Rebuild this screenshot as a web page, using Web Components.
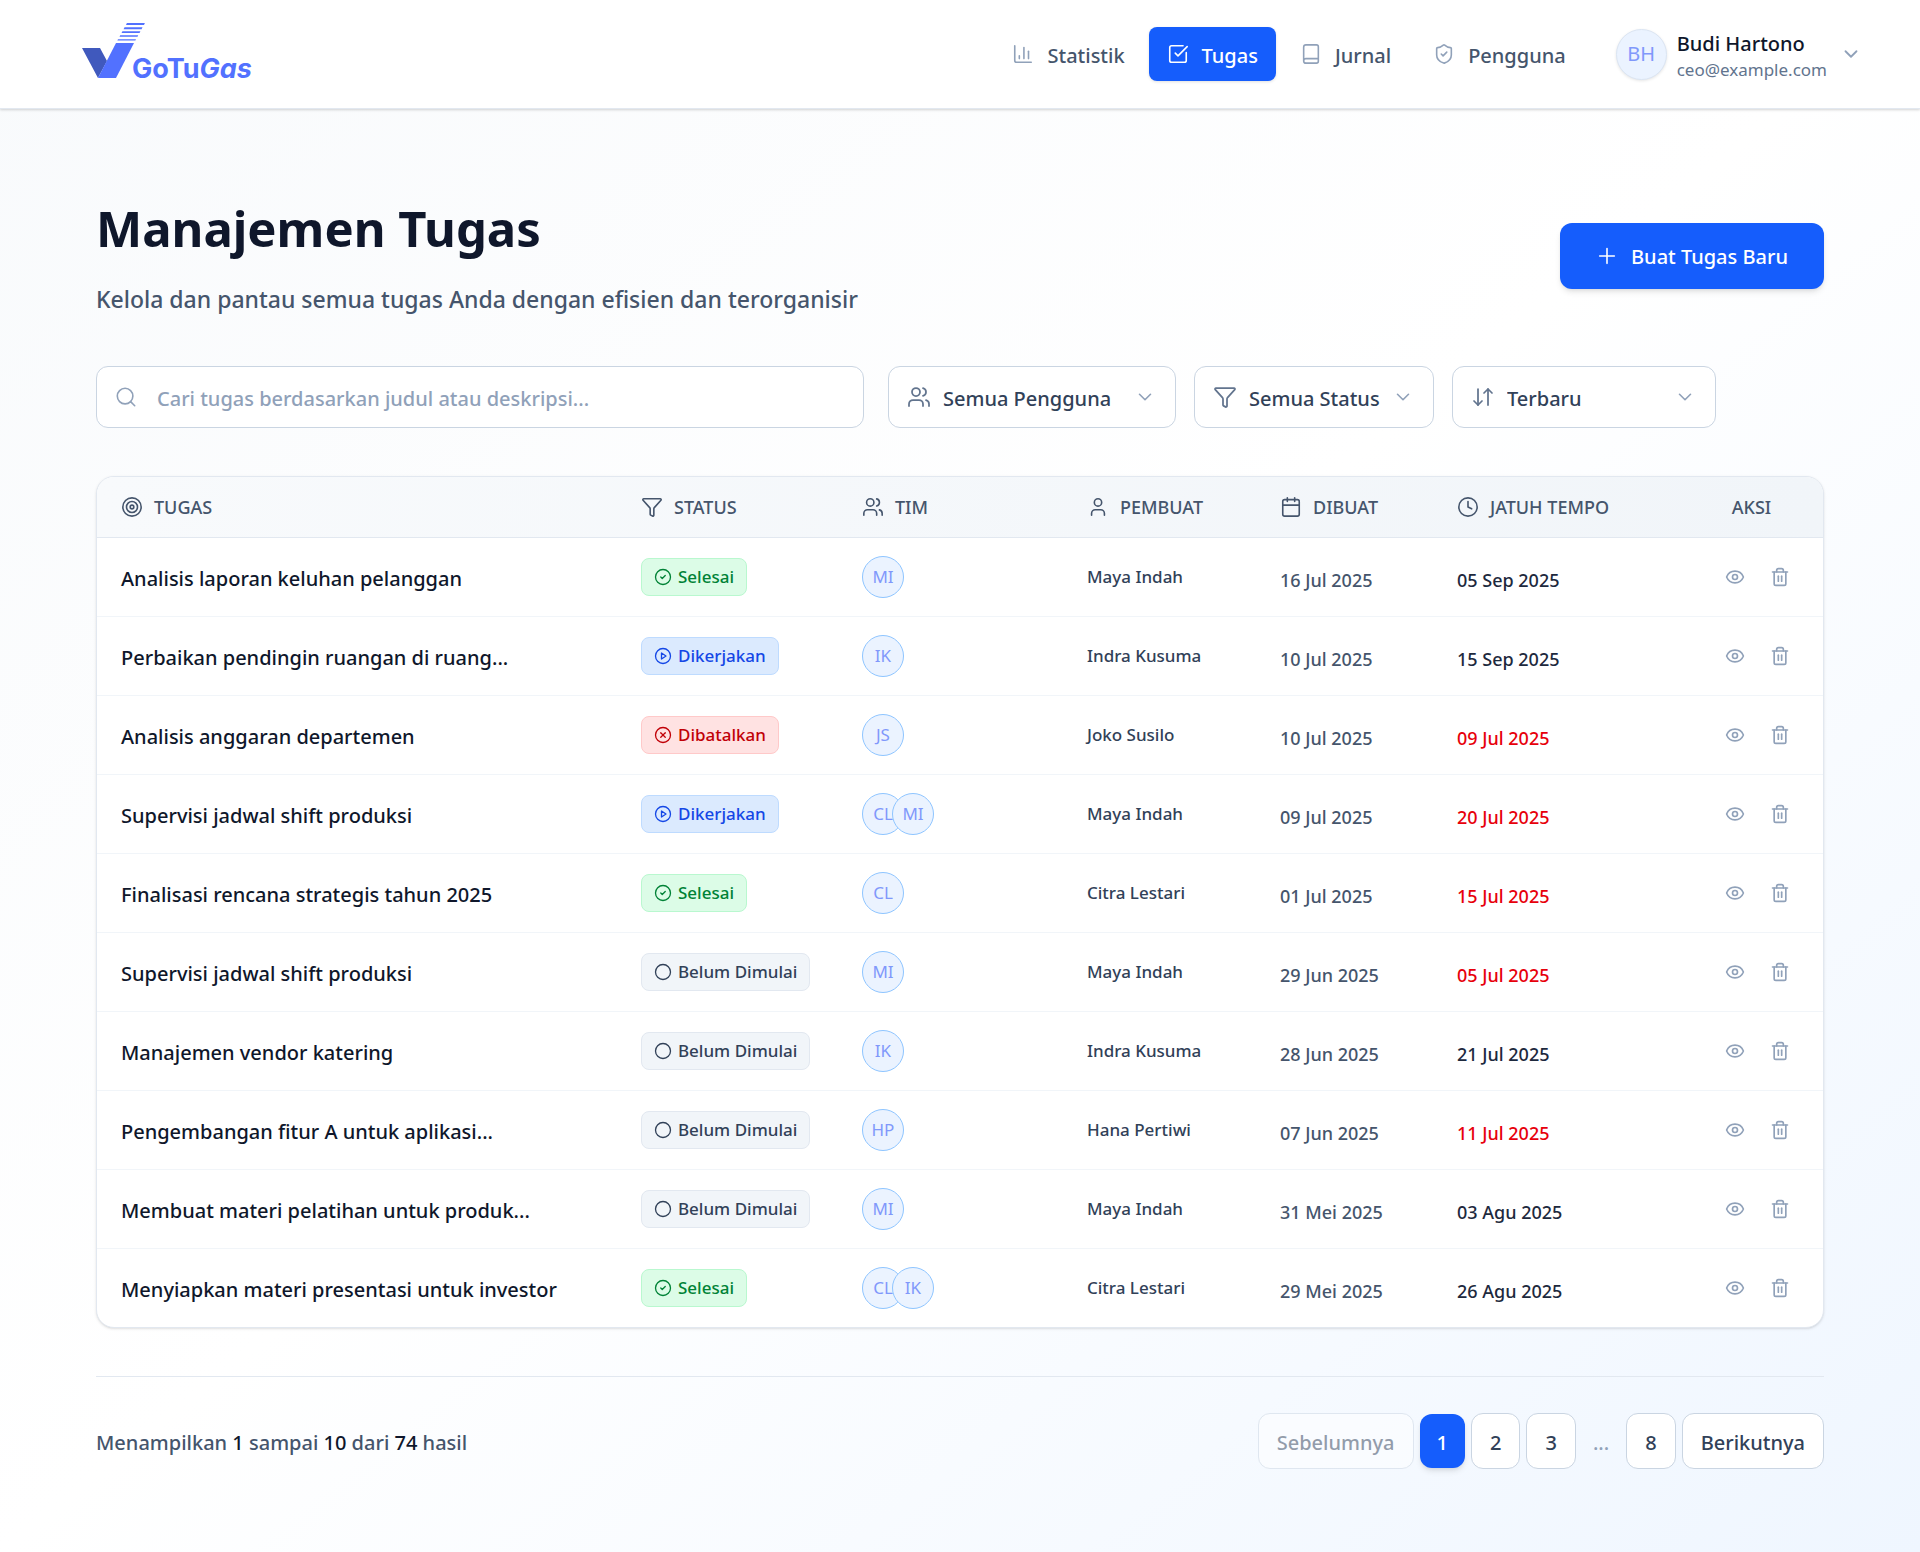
<!DOCTYPE html>
<html lang="id">
<head>
<meta charset="utf-8">
<meta name="viewport" content="width=device-width, initial-scale=1">
<title>GoTuGas – Manajemen Tugas</title>
<style>
  :root {
    --blue: #155dfc;
    --ink: #0f172b;
    --slate-800: #1d293d;
    --slate-700: #314158;
    --slate-600: #45556c;
    --slate-500: #62748e;
    --slate-400: #90a1b9;
    --slate-300: #cad5e2;
    --slate-200: #e2e8f0;
    --slate-100: #f1f5f9;
  }
  body {
    margin: 0;
    min-height: 100vh;
    font-family: "Noto Sans", "Open Sans", sans-serif;
    font-size: 18px;
    line-height: 27px;
    color: var(--ink);
    background: linear-gradient(to bottom right, #f8fafc, #ffffff 50%, #eff6ff);
  }
</style>
</head>
<body>
<task-app></task-app>

<script>
const ICONS = {
  chart: '<path d="M3 3v16a2 2 0 0 0 2 2h16"/><path d="M18 17V9"/><path d="M13 17V5"/><path d="M8 17v-3"/>',
  tasks: '<path d="M21 10.5V19a2 2 0 0 1-2 2H5a2 2 0 0 1-2-2V5a2 2 0 0 1 2-2h12.5"/><path d="m9 11 3 3L22 4"/>',
  book: '<path d="M4 19.5v-15A2.5 2.5 0 0 1 6.5 2H18a2 2 0 0 1 2 2v16a2 2 0 0 1-2 2H6.5a2.5 2.5 0 0 1 0-5H20"/>',
  shield: '<path d="M20 13c0 5-3.5 7.5-7.66 8.95a1 1 0 0 1-.67-.01C7.5 20.5 4 18 4 13V6a1 1 0 0 1 1-1c2 0 4.5-1.2 6.24-2.72a1.17 1.17 0 0 1 1.52 0C14.51 3.81 17 5 19 5a1 1 0 0 1 1 1z"/><path d="m9 12 2 2 4-4"/>',
  chevron: '<path d="m6 9 6 6 6-6"/>',
  plus: '<path d="M4 12h16"/><path d="M12 4v16"/>',
  search: '<circle cx="11" cy="11" r="8.5"/><path d="m21.5 21.5-4.5-4.5"/>',
  users: '<path d="M16 21v-2a4 4 0 0 0-4-4H6a4 4 0 0 0-4 4v2"/><circle cx="9" cy="7" r="4"/><path d="M22 21v-2a4 4 0 0 0-3-3.87"/><path d="M16 3.13a4 4 0 0 1 0 7.75"/>',
  user: '<path d="M19 21v-2a4 4 0 0 0-4-4H9a4 4 0 0 0-4 4v2"/><circle cx="12" cy="7" r="4"/>',
  funnel: '<path d="M10 20a1 1 0 0 0 .553.895l2 1A1 1 0 0 0 14 21v-7a2 2 0 0 1 .517-1.341L21.74 4.67A1 1 0 0 0 21 3H3a1 1 0 0 0-.742 1.67l7.225 7.989A2 2 0 0 1 10 14z"/>',
  sort: '<path d="m3 16 4 4 4-4"/><path d="M7 20V4"/><path d="m21 8-4-4-4 4"/><path d="M17 4v16"/>',
  target: '<circle cx="12" cy="12" r="10"/><circle cx="12" cy="12" r="6"/><circle cx="12" cy="12" r="2"/>',
  calendar: '<path d="M8 2v4"/><path d="M16 2v4"/><rect width="18" height="18" x="3" y="4" rx="2"/><path d="M3 10h18"/>',
  clock: '<circle cx="12" cy="12" r="10"/><path d="M12 6v6l4 2"/>',
  eye: '<path d="M2.062 12.348a1 1 0 0 1 0-.696 10.75 10.75 0 0 1 19.876 0 1 1 0 0 1 0 .696 10.75 10.75 0 0 1-19.876 0"/><circle cx="12" cy="12" r="3"/>',
  trash: '<path d="M3 6h18"/><path d="M19 6v14a2 2 0 0 1-2 2H7a2 2 0 0 1-2-2V6"/><path d="M8 6V4a2 2 0 0 1 2-2h4a2 2 0 0 1 2 2v2"/><path d="M10 11v6"/><path d="M14 11v6"/>',
  done: '<circle cx="12" cy="12" r="10"/><path d="m9 12 2 2 4-4"/>',
  progress: '<circle cx="12" cy="12" r="10"/><path d="M10 8v8l6-4z"/>',
  cancelled: '<circle cx="12" cy="12" r="10"/><path d="m15 9-6 6"/><path d="m9 9 6 6"/>',
  pending: '<circle cx="12" cy="12" r="10"/>'
};

class BaseElement extends HTMLElement {
  connectedCallback() {
    if (this.shadowRoot) return;
    this.attachShadow({ mode: 'open' }).innerHTML = this.render();
  }
}

/* Line icon: <ui-icon name="eye" size="20" stroke="2"> */
class UiIcon extends BaseElement {
  render() {
    const size = this.getAttribute('size') || 22;
    return `<style>:host{display:inline-flex;flex:none}svg{display:block}</style>
      <svg width="${size}" height="${size}" viewBox="0 0 24 24" fill="none" stroke="currentColor"
        stroke-width="${this.getAttribute('stroke') || 1.75}" stroke-linecap="round" stroke-linejoin="round"
        aria-hidden="true">${ICONS[this.getAttribute('name')]}</svg>`;
  }
}

class AppLogo extends BaseElement {
  render() {
    return `<style>
      :host{display:block}
      a{display:flex;align-items:flex-end;color:#5271ff;text-decoration:none}
      svg{display:block;margin-right:-14px}
      span{font:700 27px/20px Inter,sans-serif}
      i{font-style:italic}
    </style>
    <a href="#" aria-label="GoTuGas">
      <svg width="64" height="56" viewBox="0 0 64 56" aria-hidden="true">
        <path d="M0 25H18L25 38L16 55Z" fill="#4059bd"/>
        <path d="M34 20H52L34 55H16Z" fill="#5271ff"/>
        <g fill="#5271ff">
          <path d="M44.900 0h18l-.9 2h-18z"/><path d="M42.500 4.200h18l-.9 2h-18z"/>
          <path d="M40.400 8.200h18l-.8 1.700h-18z"/><path d="M38.200 12.200h18l-.7 1.500h-18z"/>
          <path d="M36 16.300h18l-.6 1.300h-18z"/>
        </g>
      </svg>
      <span>GoTu<i>Gas</i></span>
    </a>`;
  }
}

class NavLink extends BaseElement {
  render() {
    return `<style>
      :host{display:block}
      a{display:flex;align-items:center;gap:13px;padding:13px 18px 14px;border-radius:8px;
        font-size:20px;line-height:27px;font-weight:500;color:var(--slate-600);text-decoration:none}
      span{padding-top:2px;margin-bottom:-2px}
      ui-icon{color:var(--slate-400)}
      :host([active]) a{background:var(--blue);color:#fff;box-shadow:0 1px 3px rgb(0 0 0/.12)}
      :host([active]) ui-icon{color:#fff}
    </style>
    <a href="#"${this.hasAttribute('active') ? ' aria-current="page"' : ''}>
      <ui-icon name="${this.getAttribute('icon')}"></ui-icon><span><slot></slot></span></a>`;
  }
}

class UserAvatar extends BaseElement {
  render() {
    return `<style>
      :host{display:flex;align-items:center;justify-content:center;box-sizing:border-box;flex:none;
        width:42px;height:42px;border:1px solid #8ec5ff;border-radius:50%;background:#ebf3ff;
        color:#8098fb;font-size:17px;line-height:24px;font-weight:400}
      :host([large]){width:51px;height:51px;border-color:#dbe5f3;font-size:20px;
        box-shadow:0 1px 3px rgb(0 0 0/.1)}
    </style><slot></slot>`;
  }
}

class UserMenu extends BaseElement {
  render() {
    return `<style>
      :host{display:block}
      button{display:flex;align-items:center;gap:10px;padding:0;border:0;background:none;
        font:inherit;text-align:left;color:inherit;cursor:pointer}
      .who{display:flex;flex-direction:column;padding-top:3px}
      .name{font-size:20px;line-height:27px;font-weight:500;color:var(--ink)}
      .mail{font-size:17px;line-height:25px;color:var(--slate-500)}
      ui-icon{color:var(--slate-400);margin-left:3px}
    </style>
    <button type="button" aria-haspopup="menu">
      <user-avatar large>BH</user-avatar>
      <span class="who"><span class="name"><slot name="name"></slot></span>
      <span class="mail"><slot name="mail"></slot></span></span>
      <ui-icon name="chevron" stroke="2"></ui-icon>
    </button>`;
  }
}

class AppHeader extends BaseElement {
  render() {
    return `<style>
      :host{display:block;background:#fff;border-bottom:1px solid var(--slate-200);
        box-shadow:0 1px 3px rgb(0 0 0/.1),0 1px 2px rgb(0 0 0/.08)}
      .bar{display:flex;align-items:center;justify-content:space-between;box-sizing:border-box;
        height:108px;padding:0 58px 0 82px}
      app-logo{padding-bottom:6px}
      .right,nav{display:flex;align-items:center}
      nav{gap:6px}
      .right{gap:32px}
    </style>
    <header class="bar">
      <app-logo></app-logo>
      <div class="right">
        <nav aria-label="Utama">
          <nav-link icon="chart">Statistik</nav-link>
          <nav-link icon="tasks" active>Tugas</nav-link>
          <nav-link icon="book">Jurnal</nav-link>
          <nav-link icon="shield">Pengguna</nav-link>
        </nav>
        <user-menu><span slot="name">Budi Hartono</span><span slot="mail">ceo@example.com</span></user-menu>
      </div>
    </header>`;
  }
}

class PageHeading extends BaseElement {
  render() {
    return `<style>
      :host{display:flex;align-items:center;justify-content:space-between}
      h1{margin:0;font-size:49px;line-height:64px;font-weight:700;color:var(--ink)}
      p{margin:23px 0 0;font-size:23px;line-height:32px;font-weight:500;color:var(--slate-600)}
      button{display:flex;align-items:center;gap:13px;padding:20px 36px 19px;border:0;border-radius:12px;
        background:var(--blue);color:#fff;font-family:inherit;font-size:20px;line-height:27px;font-weight:500;cursor:pointer;
        box-shadow:0 4px 6px -1px rgb(0 0 0/.1),0 2px 4px -2px rgb(0 0 0/.1)}
    </style>
    <div><h1><slot name="title"></slot></h1><p><slot name="subtitle"></slot></p></div>
    <button type="button"><ui-icon name="plus"></ui-icon><slot name="action"></slot></button>`;
  }
}

const FIELD = `
  :host{display:block;position:relative}
  .lead,.chev{position:absolute;top:0;bottom:0;align-items:center;pointer-events:none}
  .lead{left:19px}
  input,select{box-sizing:border-box;width:100%;height:62px;margin:0;border:1px solid var(--slate-300);border-radius:12px;
    background:#fff;font-family:inherit;font-size:20px;line-height:27px;font-weight:500;outline:none;appearance:none;-webkit-appearance:none}`;

class SearchField extends BaseElement {
  render() {
    const hint = this.getAttribute('placeholder');
    return `<style>${FIELD}
      .lead{color:var(--slate-400)}
      input{padding:2px 20px 0 60px;color:var(--ink)}
      input::placeholder{color:var(--slate-400);opacity:1}
    </style>
    <ui-icon class="lead" name="search"></ui-icon>
    <input type="text" aria-label="Cari tugas" placeholder="${hint}">`;
  }
}

class FilterSelect extends BaseElement {
  render() {
    return `<style>${FIELD}
      .lead{color:var(--slate-500)}
      .chev{right:20px;color:var(--slate-400)}
      select{padding:2px 44px 0 54px;color:var(--slate-700)}
    </style>
    <ui-icon class="lead" name="${this.getAttribute('icon')}" size="24"></ui-icon>
    <select aria-label="${this.getAttribute('label')}"><option>${this.getAttribute('value')}</option></select>
    <ui-icon class="chev" name="chevron"></ui-icon>`;
  }
}

class FilterBar extends BaseElement {
  render() {
    return `<style>
      :host{display:flex;gap:24px}
      search-field{flex:0 1 768px}
      .selects{display:flex;gap:18px}
      .users{width:288px}.status{width:240px}.order{width:264px}
    </style>
    <search-field placeholder="Cari tugas berdasarkan judul atau deskripsi..."></search-field>
    <div class="selects">
      <filter-select class="users" icon="users" label="Pengguna" value="Semua Pengguna"></filter-select>
      <filter-select class="status" icon="funnel" label="Status" value="Semua Status"></filter-select>
      <filter-select class="order" icon="sort" label="Urutan" value="Terbaru"></filter-select>
    </div>`;
  }
}

class StatusBadge extends BaseElement {
  render() {
    const kind = this.getAttribute('kind');
    return `<style>
      :host{display:inline-flex;align-items:center;gap:6px;box-sizing:border-box;height:38px;padding:0 12px;
        border:1px solid var(--slate-200);border-radius:8px;background:var(--slate-100);color:var(--slate-700);
        font-size:17px;line-height:24px;font-weight:500;white-space:nowrap}
      :host([kind=done]){background:#dcfce7;border-color:#b9f8cf;color:#008236}
      :host([kind=progress]){background:#dbeafe;border-color:#bedbff;color:#1447e6}
      :host([kind=cancelled]){background:#ffe2e2;border-color:#ffc9c9;color:#c10007}
    </style><ui-icon name="${kind}" size="18"></ui-icon><slot></slot>`;
  }
}

const STATUS = { done: 'Selesai', progress: 'Dikerjakan', cancelled: 'Dibatalkan', pending: 'Belum Dimulai' };
const TASKS = [
  ['Analisis laporan keluhan pelanggan', 'done', ['MI'], 'Maya Indah', '16 Jul 2025', '05 Sep 2025', 0],
  ['Perbaikan pendingin ruangan di ruang...', 'progress', ['IK'], 'Indra Kusuma', '10 Jul 2025', '15 Sep 2025', 0],
  ['Analisis anggaran departemen', 'cancelled', ['JS'], 'Joko Susilo', '10 Jul 2025', '09 Jul 2025', 1],
  ['Supervisi jadwal shift produksi', 'progress', ['CL', 'MI'], 'Maya Indah', '09 Jul 2025', '20 Jul 2025', 1],
  ['Finalisasi rencana strategis tahun 2025', 'done', ['CL'], 'Citra Lestari', '01 Jul 2025', '15 Jul 2025', 1],
  ['Supervisi jadwal shift produksi', 'pending', ['MI'], 'Maya Indah', '29 Jun 2025', '05 Jul 2025', 1],
  ['Manajemen vendor katering', 'pending', ['IK'], 'Indra Kusuma', '28 Jun 2025', '21 Jul 2025', 0],
  ['Pengembangan fitur A untuk aplikasi...', 'pending', ['HP'], 'Hana Pertiwi', '07 Jun 2025', '11 Jul 2025', 1],
  ['Membuat materi pelatihan untuk produk...', 'pending', ['MI'], 'Maya Indah', '31 Mei 2025', '03 Agu 2025', 0],
  ['Menyiapkan materi presentasi untuk investor', 'done', ['CL', 'IK'], 'Citra Lestari', '29 Mei 2025', '26 Agu 2025', 0]
];

class TaskTable extends BaseElement {
  render() {
    const head = [['target', 'TUGAS'], ['funnel', 'STATUS'], ['users', 'TIM'], ['user', 'PEMBUAT'],
      ['calendar', 'DIBUAT'], ['clock', 'JATUH TEMPO']];
    const cols = [520, 221, 225, 193, 177, 247, 143];
    return `<style>
      :host{display:block;overflow:hidden;border:1px solid var(--slate-200);border-radius:18px;background:#fff;
        box-shadow:0 1px 3px rgb(0 0 0/.1),0 1px 2px -1px rgb(0 0 0/.1)}
      table{width:100%;table-layout:fixed;border-collapse:separate;border-spacing:0}
      thead{background:linear-gradient(to right,#f8fafc,#f1f5f9)}
      th,td{box-sizing:border-box;padding:0 24px;text-align:left;vertical-align:middle;white-space:nowrap}
      th{height:61px;border-bottom:1px solid var(--slate-200);font-size:18px;line-height:24px;font-weight:500;color:var(--slate-600)}
      th>div{display:flex;align-items:center;gap:11px}
      th:last-child{text-align:center}
      td{height:79px;border-bottom:1px solid var(--slate-100);font-size:17px;line-height:24px;font-weight:500;color:var(--slate-700)}
      tr:last-child td{height:78px;border-bottom:0}
      .title{padding-top:2px;font-size:20px;line-height:27px;color:var(--ink)}
      .made,.due{padding-top:6px;font-size:18px}
      .made{color:var(--slate-600)}
      .due{color:var(--slate-800)}
      .late{color:#e7000b}
      .team,.acts,status-badge{vertical-align:middle}
      .team,.acts{display:flex}
      .team user-avatar+user-avatar{margin-left:-12px}
      .acts{justify-content:flex-end;gap:7px}
      .acts button{display:flex;padding:9px;border:0;background:none;color:var(--slate-400);cursor:pointer}
    </style>
    <table>
      <colgroup>${cols.map(c => `<col style="width:${(c / 17.26).toFixed(3)}%">`).join('')}</colgroup>
      <thead><tr>${head.map(([i, t]) => `<th scope="col"><div><ui-icon name="${i}"></ui-icon>${t}</div></th>`).join('')}<th scope="col">AKSI</th></tr></thead>
      <tbody>${TASKS.map(([title, st, team, by, made, due, late]) => `<tr>
        <td class="title">${title}</td>
        <td><status-badge kind="${st}">${STATUS[st]}</status-badge></td>
        <td><div class="team">${team.map(t => `<user-avatar>${t}</user-avatar>`).join('')}</div></td>
        <td>${by}</td>
        <td class="made">${made}</td>
        <td class="due${late ? ' late' : ''}">${due}</td>
        <td><div class="acts">
          <button type="button" aria-label="Lihat"><ui-icon name="eye" size="20" stroke="2"></ui-icon></button>
          <button type="button" aria-label="Hapus"><ui-icon name="trash" size="20" stroke="2"></ui-icon></button>
        </div></td></tr>`).join('')}</tbody>
    </table>`;
  }
}

class PageFooter extends BaseElement {
  render() {
    return `<style>
      :host{display:flex;align-items:center;justify-content:space-between;padding-top:36px;border-top:1px solid var(--slate-200);
        font-size:20px;line-height:27px;font-weight:500;color:var(--slate-600)}
      b{font-weight:500;color:var(--ink)}
      div{padding-top:2px}
      nav{display:flex;align-items:center;gap:6px}
      button{box-sizing:border-box;height:56px;padding:2px 18px 0;border:1px solid var(--slate-300);border-radius:12px;background:#fff;
        color:var(--slate-700);font-family:inherit;font-size:20px;line-height:27px;font-weight:500;cursor:pointer}
      button[aria-current]{height:54px;padding:2px 17px 0;border:0;background:var(--blue);color:#fff;
        box-shadow:0 4px 6px -1px rgb(0 0 0/.1),0 2px 4px -2px rgb(0 0 0/.1)}
      button:disabled{opacity:.5;cursor:default}
      span{padding:2px 11px 0;color:var(--slate-400)}
    </style>
    <div>Menampilkan <b>1</b> sampai <b>10</b> dari <b>74</b> hasil</div>
    <nav aria-label="Halaman">
      <button type="button" disabled>Sebelumnya</button>
      <button type="button" aria-current="page">1</button>
      <button type="button">2</button>
      <button type="button">3</button>
      <span>...</span>
      <button type="button">8</button>
      <button type="button">Berikutnya</button>
    </nav>`;
  }
}

class TaskApp extends BaseElement {
  render() {
    return `<style>
      :host{display:block}
      main{display:flex;flex-direction:column;padding:87px 96px 84px}
      filter-bar{margin-top:51px}
      task-table{margin-top:48px}
      page-footer{margin-top:48px}
    </style>
    <app-header></app-header>
    <main>
      <page-heading>
        <span slot="title">Manajemen Tugas</span>
        <span slot="subtitle">Kelola dan pantau semua tugas Anda dengan efisien dan terorganisir</span>
        <span slot="action">Buat Tugas Baru</span>
      </page-heading>
      <filter-bar></filter-bar>
      <task-table></task-table>
      <page-footer></page-footer>
    </main>`;
  }
}

Object.entries({
  'ui-icon': UiIcon, 'app-logo': AppLogo, 'nav-link': NavLink, 'user-avatar': UserAvatar, 'user-menu': UserMenu,
  'app-header': AppHeader, 'page-heading': PageHeading, 'search-field': SearchField, 'filter-select': FilterSelect,
  'filter-bar': FilterBar, 'status-badge': StatusBadge, 'task-table': TaskTable, 'page-footer': PageFooter, 'task-app': TaskApp
}).forEach(([tag, cls]) => customElements.define(tag, cls));
</script>
</body>
</html>
